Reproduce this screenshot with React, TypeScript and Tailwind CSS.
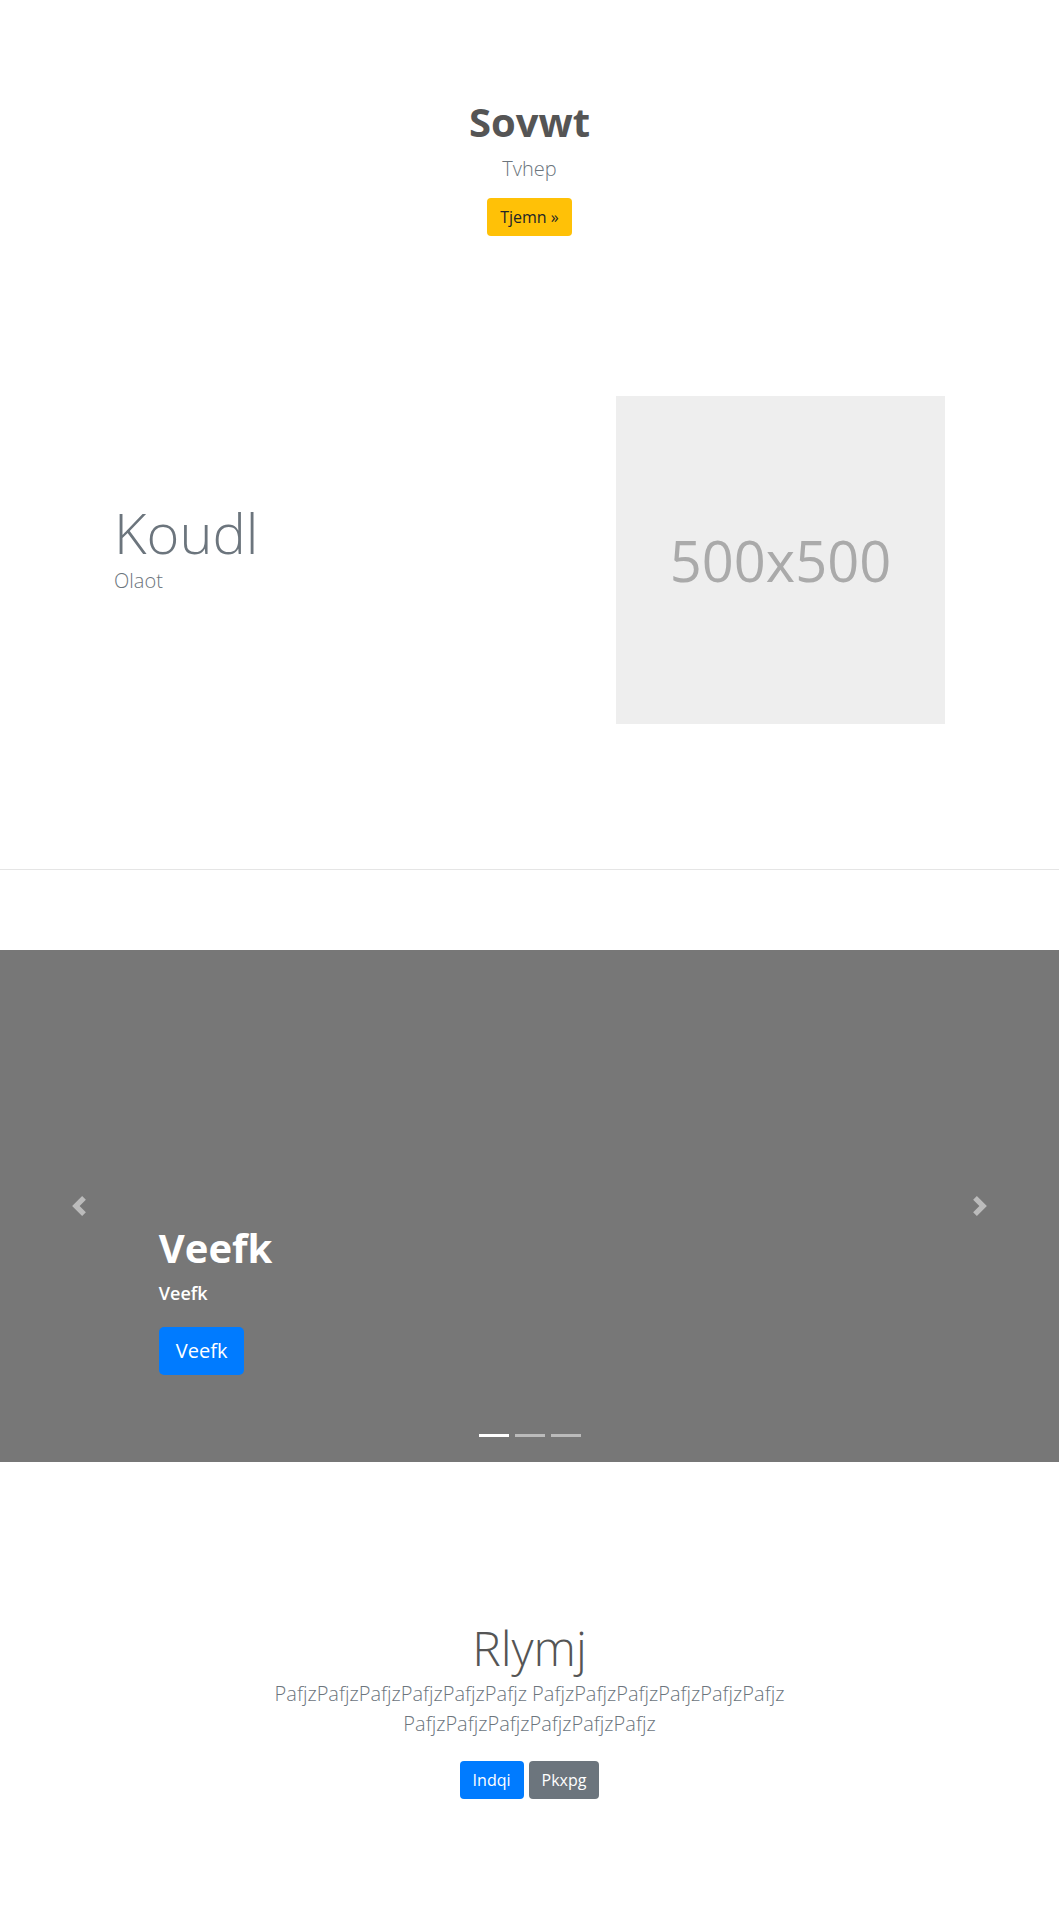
import type { ReactNode } from 'react';

const font = { fontFamily: '"Open Sans", "Noto Sans", Arial, sans-serif' };

function Chevron({ dir }: { dir: 'prev' | 'next' }) {
  const d =
    dir === 'prev'
      ? 'M5.25 0l-4 4 4 4 1.5-1.5-2.5-2.5 2.5-2.5-1.5-1.5z'
      : 'M2.75 0l-1.5 1.5 2.5 2.5-2.5 2.5 1.5 1.5 4-4-4-4z';
  return (
    <svg width="20" height="20" viewBox="0 0 8 8" className="fill-white opacity-50">
      <path d={d} />
    </svg>
  );
}

function Btn({ className, children }: { className: string; children: ReactNode }) {
  return (
    <button className={`rounded border border-transparent px-3 py-[6px] text-base leading-6 ${className}`}>
      {children}
    </button>
  );
}

export default function App() {
  const slides = [0, 1, 2];

  return (
    <div className="min-h-[1920px] bg-white" style={font}>
      {/* intro */}
      <section className="flex flex-col items-center pt-[98px] text-center">
        <h1 className="text-[40px] font-bold leading-[48px] text-[#555]">Sovwt</h1>
        <p className="mt-[8px] text-xl font-light leading-[30px] text-[#6c757d]">Tvhep</p>
        <Btn className="mt-[14px] bg-[#ffc107] text-[#212529]">Tjemn »</Btn>
      </section>

      {/* feature */}
      <section className="mt-[160px] mb-[145px] flex items-center justify-between px-[114px]">
        <div className="mb-[26px]">
          <h2 className="text-[56px] font-light leading-[67px] text-[#6c757d]">Koudl</h2>
          <p className="text-xl font-light leading-[30px] text-[#6c757d]">Olaot</p>
        </div>
        <div className="flex h-[328px] w-[329px] items-center justify-center bg-[#eee]">
          <span className="text-[56px] text-[#aaa]">500x500</span>
        </div>
      </section>

      <hr className="border-0 border-t border-[#e5e5e5]" />

      {/* carousel */}
      <section className="relative mt-[80px] flex h-[512px] bg-[#777]">
        <div className="flex w-[15%] items-center justify-center">
          <Chevron dir="prev" />
        </div>
        <div className="flex flex-1 flex-col items-start pt-[274px] text-white">
          <h3 className="text-[40px] font-bold leading-[48px]">Veefk</h3>
          <p className="mt-2 text-lg font-semibold leading-[27px]">Veefk</p>
          <button className="mt-5 rounded-[5px] border border-transparent bg-[#007bff] px-4 py-2 text-xl leading-[30px] text-white">
            Veefk
          </button>
        </div>
        <div className="flex w-[15%] items-center justify-center">
          <Chevron dir="next" />
        </div>
        <div className="absolute bottom-[25px] left-0 right-0 flex justify-center gap-[6px]">
          {slides.map((i) => (
            <span key={i} className={`h-[3px] w-[30px] ${i === 0 ? 'bg-white' : 'bg-white/50'}`} />
          ))}
        </div>
      </section>

      {/* closing */}
      <section className="flex flex-col items-center pt-[157px] text-center">
        <h2 className="text-[48px] font-light leading-[58px] text-[#555]">Rlymj</h2>
        <p className="mt-[2px] max-w-[600px] text-xl font-light leading-[30px] text-[#6c757d]">
          PafjzPafjzPafjzPafjzPafjzPafjz PafjzPafjzPafjzPafjzPafjzPafjz PafjzPafjzPafjzPafjzPafjzPafjz
        </p>
        <div className="mt-[22px] flex gap-[5px]">
          <Btn className="bg-[#007bff] text-white">Indqi</Btn>
          <Btn className="bg-[#6c757d] text-white">Pkxpg</Btn>
        </div>
      </section>
    </div>
  );
}
